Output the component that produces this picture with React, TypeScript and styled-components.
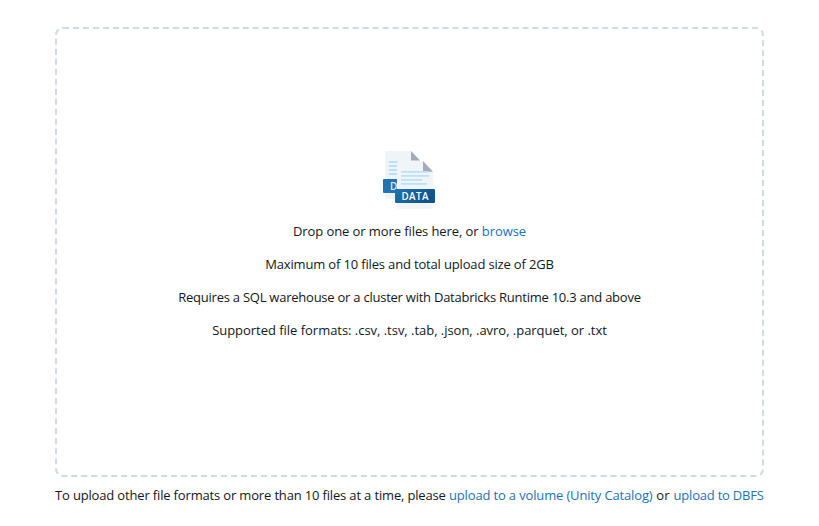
import React from "react";
import styled, { createGlobalStyle } from "styled-components";

const GlobalStyle = createGlobalStyle`
  * { box-sizing: border-box; }
  body { margin: 0; background: #fff; }
`;

const Page = styled.main`
  width: 819px;
  height: 526px;
  padding: 27px 55px 0;
  display: flex;
  flex-direction: column;
  color: #11171c;
  font: 13px/20px "Open Sans", "Noto Sans", sans-serif;
`;

const DropZone = styled.section`
  height: 450px;
  flex: none;
  border: 2px dashed #d1d9e1;
  border-radius: 8px;
  display: flex;
  flex-direction: column;
  align-items: center;
  padding-top: 120px;
`;

const FileIcon = styled.svg`
  display: block;
  flex: none;
  width: 64px;
  height: 64px;
  margin-bottom: 8px;
`;

const Line = styled.p<{ $spacing?: number }>`
  margin: 0 0 13px;
  white-space: nowrap;
  letter-spacing: ${(p) => p.$spacing ?? 0}px;
`;

const Footer = styled.footer`
  margin-top: 8px;
  white-space: nowrap;
  letter-spacing: -0.16px;
`;

const Link = styled.a<{ $spacing?: number }>`
  color: #2272b4;
  text-decoration: none;
  cursor: pointer;
  letter-spacing: ${(p) => (p.$spacing === undefined ? "inherit" : `${p.$spacing}px`)};
`;

const Conjunction = styled.span`
  letter-spacing: 0.3px;
`;

const DataFilesIcon = () => (
  <FileIcon viewBox="0.5 0 64 64" aria-hidden="true">
    <defs>
      <linearGradient id="band" x1="0" y1="0" x2="1" y2="0.35">
        <stop offset="0" stopColor="#2272b4" />
        <stop offset="1" stopColor="#0e538b" />
      </linearGradient>
    </defs>
    <path d="M9.5 2H33.5L42.5 11V50H9.5Q7.5 50 7.5 48V4Q7.5 2 9.5 2Z" fill="#eff4f8" />
    <path d="M33.5 2L42.5 11.5H33.5Z" fill="#a3acb8" />
    <path d="M11.5 13H21.5M11.5 17H19.5M11.5 21H19.5M11.5 25H19.5" stroke="#bae1fc" strokeWidth="2" />
    <rect x="5.5" y="30" width="30" height="14" rx="1" fill="#2272b4" />
    <text x="12.5" y="40.8" fill="#e3edf6" fontFamily="Open Sans" fontSize="10" fontWeight="600">D</text>
    <path d="M21.5 12H45.5L55.5 22.8V58Q55.5 60 53.5 60H21.5Q19.5 60 19.5 58V14Q19.5 12 21.5 12Z" fill="#f2f5f8" />
    <path d="M45.5 12L55.5 22.8H45.5Z" fill="#a3acb8" />
    <path d="M23.5 22.8H51M23.5 26.8H51.5M23.5 30.8H44.5M23.5 34.8H49.5" stroke="#bae1fc" strokeWidth="1.8" />
    <rect x="17.5" y="40" width="40" height="14" rx="1" fill="url(#band)" />
    <text x="24" y="50.9" fill="#fff" fontFamily="Open Sans" fontSize="9.8" fontWeight="600" textLength="27">DATA</text>
  </FileIcon>
);

export default function App() {
  return (
    <>
      <GlobalStyle />
      <Page>
        <DropZone>
          <DataFilesIcon />
          <Line $spacing={-0.09}>Drop one or more files here, or <Link>browse</Link></Line>
          <Line $spacing={-0.16}>Maximum of 10 files and total upload size of 2GB</Line>
          <Line $spacing={-0.24}>Requires a SQL warehouse or a cluster with Databricks Runtime 10.3 and above</Line>
          <Line $spacing={-0.03}>Supported file formats: .csv, .tsv, .tab, .json, .avro, .parquet, or .txt</Line>
        </DropZone>
        <Footer>
          To upload other file formats or more than 10 files at a time, please{" "}
          <Link $spacing={-0.15}>upload to a volume (Unity Catalog)</Link>
          <Conjunction> or </Conjunction>
          <Link $spacing={-0.22}>upload to DBFS</Link>
        </Footer>
      </Page>
    </>
  );
}
